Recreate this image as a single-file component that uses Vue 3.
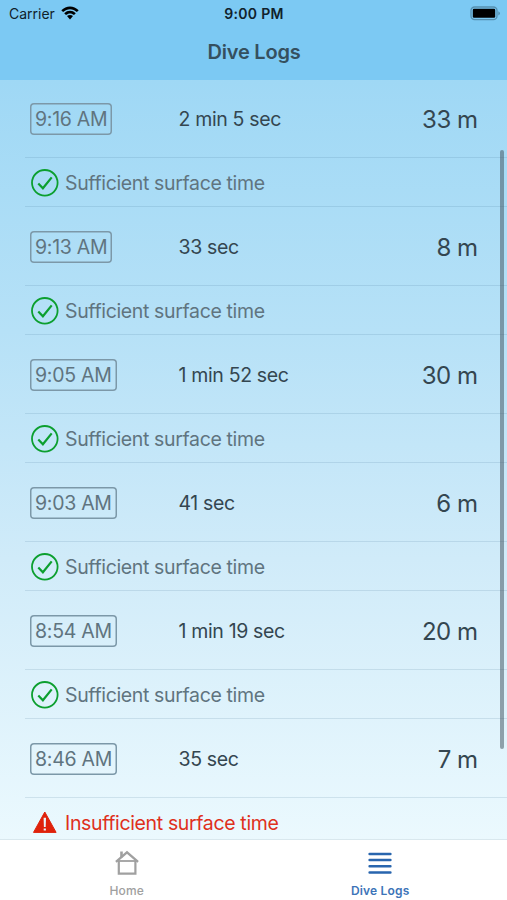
<template>
  <div class="phone">
    <header class="top-bar">
      <div class="status-bar">
        <div class="carrier">
          <span>Carrier</span>
          <svg class="wifi" width="18" height="14" viewBox="0 0 18 14">
            <path d="M0.3 4.2C5.2-.9 12.8-.9 17.7 4.2L15.9 6.1C12 2.2 6 2.2 2.1 6.1Z" />
            <path d="M3.2 7.2C6.6 3.9 11.4 3.9 14.8 7.2L13 9C10.7 6.9 7.3 6.9 5 9Z" />
            <path d="M6 10.1C7.8 8.6 10.2 8.6 12 10.1L9 13.4Z" />
          </svg>
        </div>
        <span class="clock">9:00 PM</span>
        <svg class="battery" width="31" height="15" viewBox="0 0 31 15">
          <rect x="1" y="1" width="26" height="12.6" rx="3.6" fill="none" stroke="#5590b0" stroke-width="1.3" />
          <rect x="2.8" y="2.8" width="22.4" height="9" rx="1.2" />
          <path d="M28.3 5.2Q30 6 30 7.3T28.3 9.4Z" fill="#5590b0" />
        </svg>
      </div>
      <h1>Dive Logs</h1>
    </header>

    <main class="logs">
      <div v-for="dive in dives" :key="dive.time" class="log">
        <div class="dive">
          <div class="time-col"><span class="time">{{ dive.time }}</span></div>
          <span class="duration">{{ dive.duration }}</span>
          <span class="depth">{{ dive.depth }} m</span>
        </div>
        <div class="surface" :class="{ warning: !dive.sufficient }">
          <svg v-if="dive.sufficient" class="icon" width="28" height="28" viewBox="0 0 28 28">
            <circle cx="13.8" cy="13.8" r="12.8" fill="none" stroke="#0c9f2f" stroke-width="1.8" />
            <path d="M7.3 14.5L11.9 19.3L20.7 8.4" fill="none" stroke="#0c9f2f" stroke-width="2.2" />
          </svg>
          <svg v-else class="icon" width="28" height="28" viewBox="0 0 28 28">
            <path d="M13.8 3L25.1 23.4H2.5Z" fill="#df220b" stroke="#df220b" stroke-width="1" stroke-linejoin="round" />
            <path d="M12.6 8.8H15L14.7 18H12.9ZM12.7 19.6H14.9V21.6H12.7Z" fill="#e9f7fd" />
          </svg>
          <span class="label">{{ dive.sufficient ? 'Sufficient surface time' : 'Insufficient surface time' }}</span>
        </div>
      </div>
      <div class="scrollbar"></div>
    </main>

    <nav class="tab-bar">
      <div class="tab">
        <svg width="26" height="26" viewBox="0 0 26 26" fill="none" stroke="#a0a0a0" stroke-width="2.2">
          <path d="M1.9 11.9L13 2.3L24.1 11.9" />
          <path d="M4.8 10.8V23.7H21.4V10.8" />
          <path d="M3.4 11H22.6" stroke-width="1.8" />
          <path d="M7.5 7.4V1.5" stroke-width="2.6" />
        </svg>
        <span>Home</span>
      </div>
      <div class="tab active">
        <svg width="26" height="26" viewBox="0 0 26 26" stroke="#2865ae" stroke-width="2.5" stroke-linecap="round">
          <path d="M2.6 4H23.4M2.6 10.1H23.4M2.6 16.3H23.4M2.6 22.4H23.4" />
        </svg>
        <span>Dive Logs</span>
      </div>
    </nav>
  </div>
</template>

<script setup>
const dives = [
  { time: '9:16 AM', duration: '2 min 5 sec', depth: 33, sufficient: true },
  { time: '9:13 AM', duration: '33 sec', depth: 8, sufficient: true },
  { time: '9:05 AM', duration: '1 min 52 sec', depth: 30, sufficient: true },
  { time: '9:03 AM', duration: '41 sec', depth: 6, sufficient: true },
  { time: '8:54 AM', duration: '1 min 19 sec', depth: 20, sufficient: true },
  { time: '8:46 AM', duration: '35 sec', depth: 7, sufficient: false }
]
</script>

<style>
body {
  margin: 0;
}
</style>

<style scoped>
.phone {
  display: flex;
  flex-direction: column;
  width: 507px;
  height: 900px;
  overflow: hidden;
  font-family: Inter, sans-serif;
  color: #344650;
  white-space: nowrap;
}

.top-bar {
  flex: none;
  height: 80px;
  background: #7cc9f3;
}

.status-bar {
  display: grid;
  grid-template-columns: 1fr auto 1fr;
  align-items: center;
  height: 27px;
  color: #10212b;
  font-size: 14px;
}

.carrier {
  display: flex;
  align-items: center;
  gap: 6.5px;
  padding-left: 9px;
}

.wifi {
  margin-top: -2px;
}

.clock {
  padding-left: 1px;
  font-weight: 600;
  letter-spacing: 0.3px;
}

.battery {
  justify-self: end;
  margin-right: 6px;
}

h1 {
  margin: 0;
  padding-left: 1px;
  font-size: 20px;
  font-weight: 600;
  line-height: 51px;
  letter-spacing: -0.2px;
  text-align: center;
  color: #35505f;
}

.logs {
  position: relative;
  flex: 1;
  min-height: 0;
  overflow: hidden;
  background: linear-gradient(#9fd8f5, #b6e1f7 33%, #d0ebf9 63%, #ebf9fe);
}

.log:first-child {
  margin-top: -1px;
}

.dive,
.surface {
  display: flex;
  align-items: center;
  box-sizing: border-box;
  margin-left: 25px;
  border-bottom: 1px solid rgba(60, 110, 140, 0.15);
}

.dive {
  height: 79px;
  padding: 2px 29px 0 5px;
}

.surface {
  height: 49px;
  padding-left: 6px;
}

.time-col {
  width: 148.5px;
}

.time {
  display: inline-block;
  box-sizing: border-box;
  height: 32px;
  padding: 0 5px;
  border-radius: 4px;
  box-shadow: inset 0 0 0 1.5px #7c98a8;
  font-size: 19.5px;
  line-height: 32px;
  letter-spacing: -0.27px;
  color: #60747f;
}

.duration {
  flex: 1;
  font-size: 19.5px;
  letter-spacing: -0.35px;
}

.depth {
  margin-right: 0.5px;
  font-size: 24px;
  letter-spacing: -0.5px;
}

.icon {
  flex: none;
  margin-top: 1px;
}

.label {
  margin: 1px 0 0 6px;
  font-size: 19.5px;
  letter-spacing: -0.36px;
  color: #60747f;
}

.warning .label {
  color: #df301c;
}

.scrollbar {
  position: absolute;
  top: 70px;
  right: 3.5px;
  width: 4px;
  height: 599px;
  border-radius: 2px;
  background: rgba(65, 82, 93, 0.52);
}

.tab-bar {
  display: flex;
  flex: none;
  box-sizing: border-box;
  height: 60px;
  box-shadow: 0 -1px 0 #d9e8ee;
  background: #fff;
  z-index: 1;
}

.tab {
  display: flex;
  flex: 1;
  flex-direction: column;
  align-items: center;
  padding-top: 10px;
  color: #a0a0a0;
  font-size: 12px;
  font-weight: 500;
}

.tab span {
  margin-top: 7px;
  line-height: 15px;
  letter-spacing: 0.2px;
}

.tab.active {
  color: #3d74b8;
  font-weight: 600;
}
</style>
